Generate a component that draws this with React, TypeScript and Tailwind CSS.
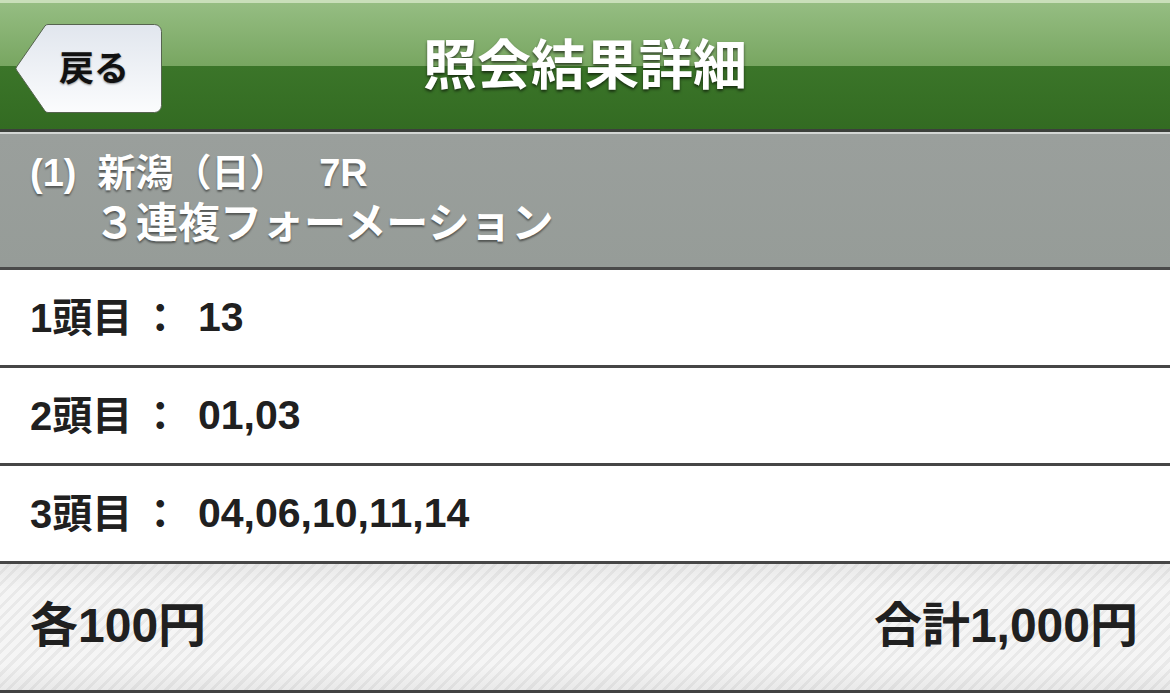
import React from "react";

const FONT = {
  fontFamily: '"Liberation Sans", "Noto Sans CJK JP", sans-serif',
};

function BackButton() {
  return (
    <div className="relative h-[89px] w-[147px]">
      <svg
        className="absolute inset-0"
        width="147"
        height="89"
        viewBox="0 0 147 89"
      >
        <defs>
          <linearGradient id="backFill" x1="0" y1="0" x2="0" y2="1">
            <stop offset="0" stopColor="#e1e6ee" />
            <stop offset="1" stopColor="#fbfcfd" />
          </linearGradient>
        </defs>
        <path
          d="M33 0.5 H139.5 a7 7 0 0 1 7 7 V81.5 a7 7 0 0 1 -7 7 H33 a4 4 0 0 1 -3 -1.4 L1.5 46 a2.5 2.5 0 0 1 0 -3 L30 1.9 a4 4 0 0 1 3 -1.4 Z"
          fill="url(#backFill)"
          stroke="#56644f"
          strokeWidth="1"
        />
      </svg>
      <div className="relative flex h-full items-center pl-[44px]">
        <span className="text-[35px] font-bold leading-none text-[#111] [text-shadow:0_1px_2px_rgba(0,0,0,0.45)]">
          戻る
        </span>
      </div>
    </div>
  );
}

function Row({ label, value }: { label: string; value: string }) {
  return (
    <div className="flex h-[98px] items-center border-b-[3px] border-[#464646] bg-white pl-[30px] text-[#202020]">
      <span className="flex w-[168px] items-center text-[40px] font-bold leading-none">
        <span>{label}</span>
        <span className="ml-[8px]">：</span>
      </span>
      <span className="text-[41px] font-bold leading-none">{value}</span>
    </div>
  );
}

export default function App() {
  return (
    <div className="h-[698px] w-[1170px] overflow-hidden bg-white" style={FONT}>
      {/* navigation bar */}
      <header>
        <div className="h-[3px] bg-[#c9dfba]" />
        <div className="grid h-[126px] grid-cols-[1fr_auto_1fr] items-center bg-[linear-gradient(to_bottom,#95bd82_0%,#78a661_50%,#3b7529_50%,#336b22_100%)]">
          <div className="pl-[15px] pt-[4px]">
            <BackButton />
          </div>
          <h1 className="text-[54px] font-bold leading-none text-white [text-shadow:0_2px_3px_rgba(0,0,0,0.6)]">
            照会結果詳細
          </h1>
          <div />
        </div>
        <div className="h-[3px] bg-[#3c403b]" />
        <div className="h-[2px] bg-[#d3d6d4]" />
      </header>

      {/* race summary */}
      <section className="flex h-[136px] flex-col justify-center border-b-[3px] border-[#4a4a4a] bg-[linear-gradient(to_bottom,#9a9f9c,#969c98)] pb-[4px] pl-[30px] text-white [text-shadow:0_2px_2px_rgba(0,0,0,0.45)]">
        <div className="text-[38px] font-bold leading-[50px]">
          (1)&nbsp; 新潟（日）&nbsp;&nbsp; 7R
        </div>
        <div className="pl-[64px] text-[42px] font-bold leading-[52px]">
          ３連複フォーメーション
        </div>
      </section>

      {/* selected horses */}
      <Row label="1頭目" value="13" />
      <Row label="2頭目" value="01,03" />
      <Row label="3頭目" value="04,06,10,11,14" />

      {/* totals */}
      <footer className="flex h-[129px] items-center justify-between border-b-[3px] border-[#424242] bg-[linear-gradient(to_bottom,rgba(0,0,0,0.05),rgba(0,0,0,0)_20%,rgba(0,0,0,0)_80%,rgba(0,0,0,0.05)),repeating-linear-gradient(135deg,#f5f5f5_0px,#f5f5f5_5px,#e9e9e9_5px,#e9e9e9_8px)] pb-[2px] pl-[30px] pr-[32px] text-[#202020]">
        <span className="text-[48px] font-bold leading-none">各100円</span>
        <span className="text-[48px] font-bold leading-none">合計1,000円</span>
      </footer>
    </div>
  );
}
